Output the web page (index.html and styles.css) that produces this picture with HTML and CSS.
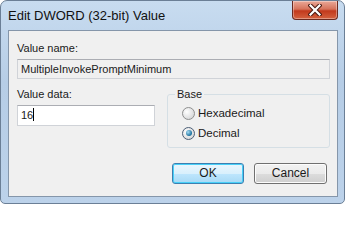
FILE: index.html
```html
<!DOCTYPE html>
<html>
<head>
<meta charset="utf-8">
<link rel="stylesheet" href="styles.css">
</head>
<body>
<div class="window">
  <div class="titlebar">
    <span class="title">Edit DWORD (32-bit) Value</span>
    <div class="close">
      <svg width="14" height="12" viewBox="0 0 14 12"><path d="M2.5 1.5 L11.5 10.5 M11.5 1.5 L2.5 10.5" stroke="#4a1a12" stroke-width="4.2" stroke-linecap="square"/><path d="M2.5 1.5 L11.5 10.5 M11.5 1.5 L2.5 10.5" stroke="#ffffff" stroke-width="2.2" stroke-linecap="square"/></svg>
    </div>
  </div>
  <div class="client">
    <div class="label">Value name:</div>
    <div class="field readonly">MultipleInvokePromptMinimum</div>
    <div class="row">
      <div class="left">
        <div class="label">Value data:</div>
        <div class="field data">16<span class="caret"></span></div>
      </div>
      <fieldset class="group">
        <legend>Base</legend>
        <div class="radio"><span class="dot"></span>Hexadecimal</div>
        <div class="radio"><span class="dot on"></span>Decimal</div>
      </fieldset>
    </div>
    <div class="buttons">
      <div class="btn default">OK</div>
      <div class="btn">Cancel</div>
    </div>
  </div>
</div>
</body>
</html>
```
FILE: styles.css
```css
html, body { margin: 0; padding: 0; background: #ffffff; }
body { font-family: "Liberation Sans", Arial, sans-serif; font-size: 11px; color: #1a1a1a; }
.window {
  width: 345px; height: 204px; box-sizing: border-box;
  border: 1px solid #6b7f96; border-radius: 7px 7px 5px 5px;
  background: linear-gradient(#c8dcf0, #b6cde6 40%, #bcd2ea);
  padding: 0 6px 6px 7px;
  display: flex; flex-direction: column;
}
.titlebar { height: 29px; flex: none; display: flex; align-items: flex-start; justify-content: space-between; }
.title { font-size: 13px; margin-top: 7px; color: #111; }
.close {
  width: 46px; height: 19px; box-sizing: border-box;
  border: 1px solid #6b2a20; border-top: none; border-radius: 0 0 4px 4px;
  background: linear-gradient(#eaa898, #d6735b 45%, #c2391c 55%, #d4623f);
  display: flex; align-items: center; justify-content: center;
  box-shadow: inset 0 0 0 1px rgba(255,255,255,0.35);
}
.client {
  flex: 1; background: #f0f0f0; border: 1px solid #8596aa;
  padding: 10px 7px 0 8px; display: flex; flex-direction: column;
}
.label { height: 15px; line-height: 15px; }
.field {
  box-sizing: border-box; height: 20px; line-height: 18px; padding: 0 3px;
  border: 1px solid #d0d3d8; border-top-color: #abadb3; margin-top: 3px;
}
.readonly { background: #f0f0f0; }
.row { display: flex; margin-top: 8px; gap: 12px; }
.left { width: 138px; flex: none; }
.data { background: #fff; width: 138px; height: 21px; line-height: 19px; }
.caret { display: inline-block; width: 1px; height: 13px; background: #000; vertical-align: -2px; }
.group {
  margin: 0; flex: 1; border: 1px solid #d5dfe5; border-radius: 3px;
  padding: 2px 0 0 14px; height: 61px; box-sizing: border-box; min-width: 0;
}
.group legend { padding: 0 2px; margin-left: -7px; line-height: 14px; }
.radio { display: flex; align-items: center; height: 20px; font-size: 11.5px; }
.dot {
  width: 13px; height: 13px; border-radius: 50%; margin-right: 3px;
  border: 1px solid #8e8f8f; box-sizing: border-box;
  background: radial-gradient(circle at 35% 35%, #ffffff, #d6d7d8 80%);
  position: relative; flex: none;
}
.dot.on { border-color: #4b5e76; }
.dot.on::after {
  content: ""; position: absolute; left: 2.5px; top: 2.5px; width: 6px; height: 6px; border-radius: 50%;
  background: radial-gradient(circle at 35% 35%, #a6dcf5, #1a6f9c 70%);
}
.buttons { display: flex; justify-content: flex-end; gap: 10px; margin-top: 15px; padding-right: 3px; }
.btn {
  width: 72px; height: 21px; box-sizing: border-box; border: 1px solid #707070; border-radius: 3px;
  background: linear-gradient(#f2f2f2, #ebebeb 50%, #dddddd 51%, #cfcfcf);
  text-align: center; line-height: 19px; font-size: 12px;
  box-shadow: inset 0 0 0 1px #fcfcfc;
}
.btn + .btn { width: 73px; }
.btn.default { border-color: #3c7fb1; box-shadow: inset 0 0 0 1px #48d0f8; background: linear-gradient(#eaf6fd, #d9f0fc 50%, #bee6fd 51%, #a7d9f5); }
```
